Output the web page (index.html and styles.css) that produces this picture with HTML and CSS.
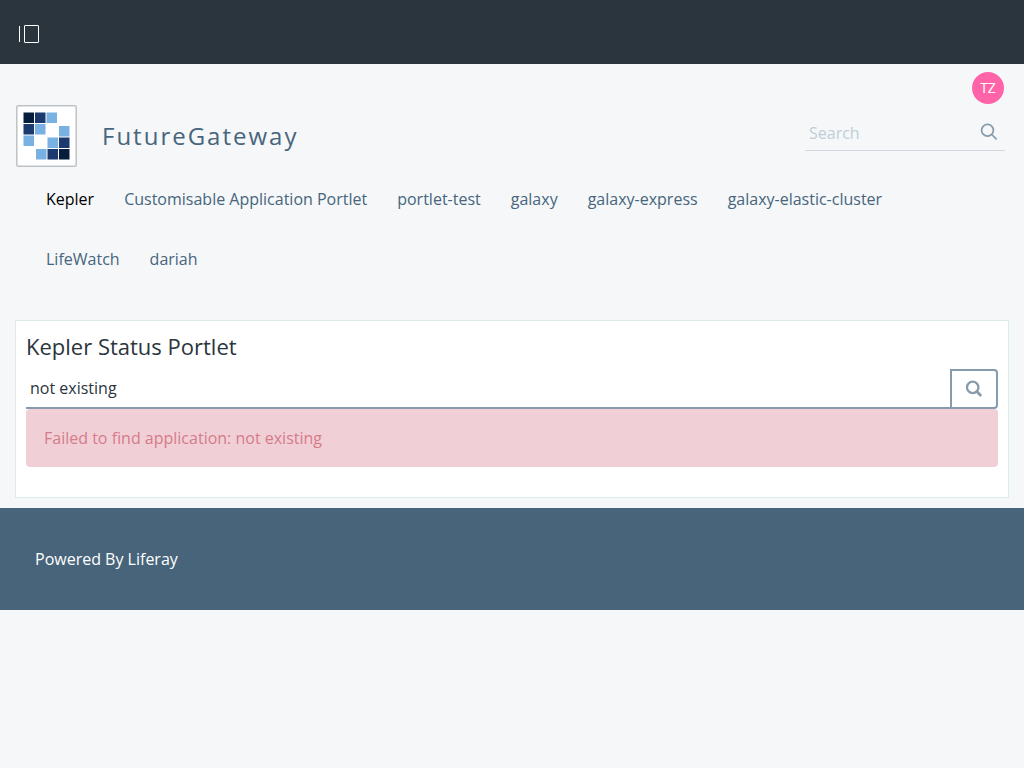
FILE: index.html
```html
<!DOCTYPE html>
<html lang="en">
<head>
<meta charset="utf-8">
<title>Kepler - FutureGateway</title>
<link rel="stylesheet" href="styles.css">
</head>
<body>
<div class="control-bar">
  <button class="menu-toggle" type="button" aria-label="Open product menu">
    <svg width="22" height="20" viewBox="0 0 22 20"><path d="M1.5 2v16" stroke="#fff"/><rect x="6.500" y="1.500" width="14" height="17" rx="0.500" fill="none" stroke="#fff"/></svg>
  </button>
</div>
<header class="banner">
  <div class="user-bar"><a class="avatar" href="#" aria-label="User profile">TZ</a></div>
  <div class="heading">
    <a class="logo" href="#" aria-label="FutureGateway home">
      <svg width="61" height="62" viewBox="0 0 61 62">
        <rect x="0.800" y="0.800" width="59.400" height="60.400" rx="1.500" fill="#fff" stroke="#bfc2c4" stroke-width="1.500"/>
        <g fill="#061d3c"><rect x="7.500" y="7.500" width="10.500" height="10.500"/><rect x="43" y="44" width="10.500" height="10.500"/></g>
        <g fill="#1c3a6e"><rect x="19" y="7.500" width="10.500" height="10.500"/><rect x="7.500" y="19" width="10.500" height="10.500"/><rect x="43" y="32.500" width="10.500" height="10.500"/><rect x="31.500" y="44" width="10.500" height="10.500"/></g>
        <g fill="#78b1e2"><rect x="30.500" y="7.500" width="10.500" height="10.500"/><rect x="19" y="19" width="10.500" height="10.500"/><rect x="7.500" y="30.500" width="10.500" height="10.500"/><rect x="43" y="21" width="10.500" height="10.500"/><rect x="31.500" y="32.500" width="10.500" height="10.500"/><rect x="20" y="44" width="10.500" height="10.500"/></g>
      </svg>
    </a>
    <h1 class="site-name">FutureGateway</h1>
    <form class="site-search">
      <input type="text" placeholder="Search" aria-label="Search">
      <button type="button" aria-label="Submit search">
        <svg width="18" height="18" viewBox="0 0 18 18" fill="none" stroke="#869cad" stroke-width="1.700"><circle cx="7.500" cy="7.300" r="5.900"/><path d="M11.700 11.500l4.900 4.900"/></svg>
      </button>
    </form>
  </div>
  <nav class="site-nav">
    <a class="current" href="#">Kepler</a>
    <a href="#">Customisable Application Portlet</a>
    <a href="#">portlet-test</a>
    <a href="#">galaxy</a>
    <a href="#">galaxy-express</a>
    <a href="#">galaxy-elastic-cluster</a>
    <a href="#">LifeWatch</a>
    <a href="#">dariah</a>
  </nav>
</header>
<main class="portlet">
  <h2>Kepler Status Portlet</h2>
  <form class="lookup">
    <input type="text" value="not existing" aria-label="Application name">
    <button type="button" aria-label="Find application">
      <svg width="18" height="18" viewBox="0 0 18 18" fill="none" stroke="#869cad" stroke-width="2.300"><circle cx="7.700" cy="7.400" r="5.700"/><path d="M11.600 11.300l4.600 4.600" stroke-width="2.800"/></svg>
    </button>
  </form>
  <div class="alert" role="alert">Failed to find application: not existing</div>
</main>
<footer class="footer">Powered By <a href="#">Liferay</a></footer>
</body>
</html>
```
FILE: styles.css
```css
* {
  box-sizing: border-box;
}

body {
  margin: 0;
  background: #f5f7f9;
  color: #2b353d;
  font: 16px/24px "Open Sans", sans-serif;
}

a {
  color: inherit;
  text-decoration: none;
}

button,
input {
  font: inherit;
  color: inherit;
  margin: 0;
  border: 0;
  border-radius: 0;
  background: none;
}

input {
  min-width: 0;
  padding: 0 4px;
  outline: 0;
}

svg {
  display: block;
}

.control-bar {
  display: flex;
  align-items: center;
  height: 64px;
  padding: 4px 18px 0;
  background: #2b353d;
}

.menu-toggle {
  padding: 0;
}

.banner {
  padding: 8px 16px 31px;
  color: #47657c;
}

.user-bar {
  display: flex;
  justify-content: flex-end;
  padding-right: 4px;
}

.avatar {
  width: 32px;
  height: 32px;
  border-radius: 50%;
  background: #ff64a8;
  color: #fff;
  font-size: 14px;
  line-height: 32px;
  text-align: center;
}

.heading {
  display: flex;
  align-items: center;
  margin-top: 1px;
}

.site-name {
  flex: 1;
  margin: 0 0 0 25px;
  font-size: 24px;
  line-height: 32px;
  font-weight: 400;
  letter-spacing: 2px;
}

.site-search {
  display: flex;
  width: 200px;
  height: 36px;
  margin: 0 3px 6px 0;
  border-bottom: 1px solid #d3d8e0;
}

.site-search input {
  flex: 1;
}

.site-search input::placeholder {
  color: #bfcfd6;
  opacity: 1;
}

.site-search button {
  padding: 0 7px 2px;
}

.site-nav {
  display: flex;
  flex-wrap: wrap;
  margin: 2px 15px 0;
  line-height: 60px;
}

.site-nav a {
  padding: 0 15px;
}

.site-nav .current {
  color: #000;
}

.portlet {
  margin: 0 15px 10px;
  padding: 10px 10px 30px;
  border: 1px solid #dbebe9;
  background: #fff;
}

.portlet h2 {
  margin: 0 0 8px;
  font-size: 22px;
  line-height: 30px;
  font-weight: 400;
}

.lookup {
  display: flex;
  height: 40px;
}

.lookup input {
  flex: 1;
  border-bottom: 2px solid #869cad;
}

.lookup button {
  display: flex;
  align-items: center;
  justify-content: center;
  width: 48px;
  border: 2px solid #869cad;
  border-radius: 0 4px 4px 0;
}

.alert {
  padding: 17px 18px;
  border-radius: 4px;
  background: #f0d0d6;
  color: #d67b8b;
}

.footer {
  padding: 39px 35px;
  background: #47647a;
  color: #fff;
}
```
